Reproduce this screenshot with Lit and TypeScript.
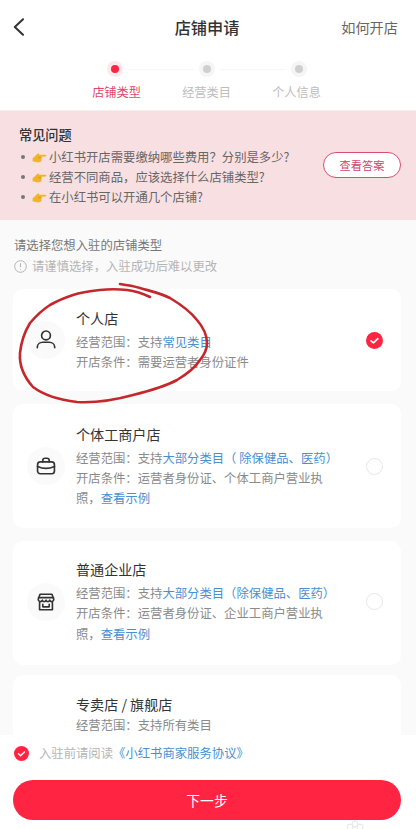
import { LitElement, html, css, svg } from "lit";
import { customElement } from "lit/decorators.js";

const hand = html`<svg class="hand" viewBox="0 0 16 12"><path d="M.5 6.500C2.500 5.500 4 3 6 1.800c1.200-.6 1.800.2 1.500 1.200h7c1.200 0 1.300 1.700 0 1.800l-4.300.3c.3 1 .3 3-.2 4.700-.5 1.200-1.800 1.500-3.500 1.500-2.500 0-4-1-6-.8z" fill="#f0b429"/><path d="M6.500 6.300l3.200-.2" stroke="#c98a12" stroke-width=".7" fill="none"/></svg>`;

const check = html`<svg class="check" viewBox="0 0 16 16"><circle cx="8" cy="8" r="8" fill="#ff2442"/><path d="M4.800 8.300l2.200 2 4.200-4" fill="none" stroke="#fff" stroke-width="1.500" stroke-linecap="round" stroke-linejoin="round"/></svg>`;

const icons = {
  person: svg`<circle cx="12" cy="7" r="4.800"/><path d="M2.500 20.500V20c0-3.500 3-5.500 6-5.500h7c3 0 6 2 6 5.500v.500"/>`,
  bag: svg`<rect x="2.800" y="7.500" width="18.400" height="13" rx="3"/><path d="M8.500 7.500V6c0-1.500 1-2.500 2.500-2.500h2c1.500 0 2.500 1 2.500 2.500v1.500M2.800 12.500c5.500 2.600 12.900 2.600 18.400 0"/>`,
  store: svg`<path d="M5.500 3.500h13l2 5.500c0 3-3.500 3.500-4.500 1-.8 2.200-3.200 2.200-4 0-.8 2.200-3.200 2.200-4 0-1 2.500-4.500 2-4.500-1zM5 12.500v8h14v-8M8.500 14.500v2.800h7v-2.800M3.800 7.200h16.400"/>`,
};

@customElement("app-root")
export class AppRoot extends LitElement {
  static styles = css`
    :host { display: block; width: 416px; height: 829px; font-family: "Noto Sans CJK SC", "Liberation Sans", sans-serif; background: #fafafa; overflow: hidden; }
    .page { position: relative; height: 829px; display: flex; flex-direction: column; }
    .scroll { flex: 1; min-height: 0; overflow: hidden; }
    .top { background: #fff; height: 111px; box-sizing: border-box; padding-top: 13px; border-bottom: 1px solid #f3f0f0; }
    .nav { height: 28px; display: grid; grid-template-columns: 1fr auto 1fr; align-items: center; padding: 0 18px 0 13px; }
    .back { width: 12px; height: 18px; }
    .title { font-size: 16.200px; font-weight: 500; color: #333; line-height: 28px; margin-left: 3px; }
    .how { justify-self: end; font-size: 14.200px; color: #666; line-height: 28px; }
    .dots { display: flex; justify-content: center; margin: 20px 0 0 -2px; }
    .dotcell { width: 92px; display: flex; justify-content: center; position: relative; }
    .dotcell + .dotcell::before { content: ""; position: absolute; top: 8px; left: -33px; width: 66px; height: 1px; background: #f6f6f6; }
    .labels { display: flex; justify-content: center; margin: 6px 0 0 -3px; }
    .labels span { width: 90px; text-align: center; font-size: 12.200px; color: #bdbdbd; line-height: 18px; }
    .labels .on { color: #e0476a; }
    .dot { width: 16px; height: 16px; box-sizing: border-box; border-radius: 50%; background: #f5f5f5; display: flex; align-items: center; justify-content: center; position: relative; z-index: 1; }
    .dot i { width: 8px; height: 8px; border-radius: 50%; background: #cfcfcf; }
    .dot.on { background: #fbe9ec; }
    .dot.on i { background: #ff2442; }
    .faq { height: 109px; box-sizing: border-box; background: #f8e0e2; padding: 14px 15px 0 19px; display: flex; align-items: flex-start; justify-content: space-between; }
    .faq h3 { margin: 0 0 2px; font-size: 13.200px; font-weight: 500; color: #333; line-height: 20px; }
    .faq ul { list-style: none; margin: 0; padding: 0; }
    .faq li { display: flex; align-items: center; font-size: 12.350px; color: #666; line-height: 20px; }
    .bullet { width: 4px; height: 4px; border-radius: 50%; background: #777; margin: 0 7px 0 2px; }
    .hand { width: 15px; height: 11px; margin-right: 2px; flex: none; }
    .answer { width: 78px; height: 26px; box-sizing: border-box; border: 1.300px solid #dc4d6f; border-radius: 13px; background: #fff; color: #d2426a; font-size: 11.200px; display: flex; align-items: center; justify-content: center; margin-top: 27px; }
    .intro { padding: 15px 14px 0; height: 69px; box-sizing: border-box; }
    .intro .a { font-size: 12.350px; color: #777; line-height: 20px; }
    .intro .b { display: flex; align-items: center; gap: 5px; font-size: 12.350px; color: #b5b5b5; line-height: 20px; margin-top: 1px; }
    .warn { width: 13px; height: 13px; }
    .cards { display: flex; flex-direction: column; gap: 13px; padding: 0 15px 0 13px; }
    .card { background: #fff; border-radius: 10px; display: flex; align-items: center; padding: 0 18px 0 14px; box-sizing: border-box; }
    .card.up { padding-bottom: 3px; }
    .card.last { height: 124px; align-items: flex-start; padding-top: 19px; margin-top: -3px; }
    .avatar { width: 38px; height: 38px; border-radius: 50%; background: #fafafa; display: flex; align-items: center; justify-content: center; flex: none; margin-right: 11px; }
    .avatar.blank { background: none; }
    .avatar svg { width: 22px; height: 22px; fill: none; stroke: #333; stroke-width: 1.800; stroke-linejoin: round; stroke-linecap: round; }
    .info { width: 256px; flex: none; }
    .name { font-size: 14.100px; color: #333; line-height: 20px; margin-bottom: 4px; }
    .line { font-size: 12.350px; color: #8a8a8a; line-height: 20.300px; white-space: nowrap; }
    .line b { font-weight: 400; color: #4a90d0; }
    .last .line { line-height: 14px; margin-top: 4px; }
    .tail { margin-left: auto; }
    .check { width: 17px; height: 17px; display: block; }
    .radio { width: 17px; height: 17px; box-sizing: border-box; border: 1px solid #e6e6e6; border-radius: 50%; display: block; }
    .foot { height: 94px; flex: none; box-sizing: border-box; background: #fff; padding: 8px 15px 0 13px; position: relative; }
    .agree { display: flex; align-items: center; height: 20px; padding-left: 1px; gap: 10px; font-size: 12.350px; color: #b5b5b5; }
    .agree .check { width: 15px; height: 15px; }
    .agree b { font-weight: 400; color: #4a90d0; margin-left: -10px; }
    .next { margin-top: 17px; height: 40px; border-radius: 20px; background: #ff2442; color: #fff; font-size: 13.800px; display: flex; align-items: center; justify-content: center; }
    .scribble { position: absolute; left: 0; top: 280px; width: 230px; height: 130px; pointer-events: none; }
    .mark { position: absolute; left: 344px; top: 820px; width: 22px; height: 9px; }
  `;

  private card(icon: keyof typeof icons, name: string, h: number, lines: unknown[], sel = false, up = false) {
    return html`<div class="card ${up ? "up" : ""}" style="height:${h}px">
      <div class="avatar"><svg viewBox="0 0 24 24">${icons[icon]}</svg></div>
      <div class="info"><div class="name">${name}</div>${lines.map((l) => html`<div class="line">${l}</div>`)}</div>
      <div class="tail">${sel ? check : html`<span class="radio"></span>`}</div>
    </div>`;
  }

  render() {
    return html`<div class="page">
      <div class="scroll">
        <div class="top">
          <div class="nav">
            <svg class="back" viewBox="0 0 12 18"><path d="M10 1.200L1.800 9l8.200 7.800" fill="none" stroke="#333" stroke-width="2" stroke-linecap="round" stroke-linejoin="round"/></svg>
            <div class="title">店铺申请</div>
            <div class="how">如何开店</div>
          </div>
          <div class="dots">
            <div class="dotcell"><span class="dot on"><i></i></span></div>
            <div class="dotcell"><span class="dot"><i></i></span></div>
            <div class="dotcell"><span class="dot"><i></i></span></div>
          </div>
          <div class="labels">
            <span class="on">店铺类型</span><span>经营类目</span><span>个人信息</span>
          </div>
        </div>
        <div class="faq">
          <div>
            <h3>常见问题</h3>
            <ul>
              <li><span class="bullet"></span>${hand}小红书开店需要缴纳哪些费用？分别是多少?</li>
              <li><span class="bullet"></span>${hand}经营不同商品，应该选择什么店铺类型?</li>
              <li><span class="bullet"></span>${hand}在小红书可以开通几个店铺?</li>
            </ul>
          </div>
          <div class="answer">查看答案</div>
        </div>
        <div class="intro">
          <div class="a">请选择您想入驻的店铺类型</div>
          <div class="b">
            <svg class="warn" viewBox="0 0 13 13"><circle cx="6.500" cy="6.500" r="5.800" fill="none" stroke="#b5b5b5"/><path d="M6.500 3.300v4M6.500 9v.8" stroke="#b5b5b5" stroke-width="1.100"/></svg>
            请谨慎选择，入驻成功后难以更改
          </div>
        </div>
        <div class="cards">
          ${this.card("person", "个人店", 102, [
            html`经营范围：支持<b>常见类目</b>`,
            "开店条件：需要运营者身份证件",
          ], true)}
          ${this.card("bag", "个体工商户店", 124, [
            html`经营范围：支持<b>大部分类目（ 除保健品、医药）</b>`,
            "开店条件：运营者身份证、个体工商户营业执",
            html`照，<b>查看示例</b>`,
          ])}
          ${this.card("store", "普通企业店", 124, [
            html`经营范围：支持<b>大部分类目（除保健品、医药）</b>`,
            "开店条件：运营者身份证、企业工商户营业执",
            html`照，<b>查看示例</b>`,
          ], false, true)}
          <div class="card last">
            <div class="avatar blank"></div>
            <div class="info"><div class="name">专卖店 / 旗舰店</div><div class="line">经营范围：支持所有类目</div></div>
          </div>
        </div>
      </div>
      <div class="foot">
        <div class="agree">${check}<span>入驻前请阅读</span><b>《小红书商家服务协议》</b></div>
        <div class="next">下一步</div>
      </div>
      <svg class="scribble" viewBox="0 280 230 130">
        <path d="M150 297C142 293 135 291 127 290 118 289 109 289 100 290 91 291 82 292 73 295 64 298 57 301 50 305 42 310 36 316 30 323 24 333 21 343 20 353 19 366 25 378 33 387 45 396 60 400 77 402 96 403 115 400 133 395 149 391 164 387 177 380 187 374 195 368 200 360 205 354 207 349 207 343 207 335 203 327 197 320 190 311 180 304 170 298 160 293 150 291 140 288 133 286 127 285 120 284" fill="none" stroke="#c4282c" stroke-width="2.600" stroke-linecap="round"/>
      </svg>
      <svg class="mark" viewBox="0 0 22 9"><g fill="none" stroke="#e4e4e4"><circle cx="6" cy="7" r="3"/><circle cx="11" cy="4" r="3"/><circle cx="16" cy="7" r="3"/></g></svg>
    </div>`;
  }
}
